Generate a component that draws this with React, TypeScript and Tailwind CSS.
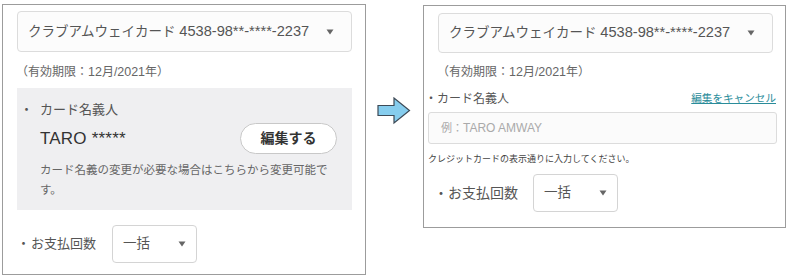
import React from 'react';

const font = { fontFamily: '"Liberation Sans", "Noto Sans CJK JP", sans-serif' };

function Caret() {
  return (
    <svg width="8" height="6" viewBox="0 0 8 6" className="shrink-0">
      <path d="M0.5 0.5 L7.5 0.5 L4 5.5 Z" fill="#666" />
    </svg>
  );
}

function CardSelect({ wide }: { wide?: boolean }) {
  return (
    <div
      className={`flex items-center justify-between w-[335px] border border-[#dcdcdc] rounded-[4px] bg-[#fcfcfc] pl-[10px] pr-[17px] ${wide ? 'h-[41px]' : 'h-[40px]'}`}
    >
      <span className="text-[13.5px] text-[#555] whitespace-nowrap">
        クラブアムウェイカード <span className="text-[14.6px]">4538-98**-****-2237</span>
      </span>
      <Caret />
    </div>
  );
}

function CountSelect() {
  return (
    <div className="flex items-center justify-between w-[85px] h-[38px] border border-[#d4d4d4] rounded-[4px] bg-white pl-[10px] pr-[10px]">
      <span className="text-[13.5px] text-[#555]">一括</span>
      <Caret />
    </div>
  );
}

function Arrow() {
  return (
    <svg width="34" height="28" viewBox="0 0 34 28" className="mt-[97px] ml-[11px] mr-[12px] shrink-0">
      <path
        d="M1 8.5 L17 8.5 L17 1 L32.5 13.5 L17 26 L17 18.5 L1 18.5 Z"
        fill="#86cdee"
        stroke="#3d4a57"
        strokeWidth="1.2"
        strokeLinejoin="miter"
      />
    </svg>
  );
}

export default function App() {
  return (
    <div className="w-[788px] h-[278px] bg-white flex items-start pl-[2px]" style={font}>
      {/* before */}
      <div className="mt-[4px] w-[364px] h-[271px] border border-[#9c9c9c] pt-[6px] pl-[14px] shrink-0">
        <CardSelect wide />
        <div className="mt-[11px] h-[18px] leading-[18px] text-[12px] text-[#666] -ml-[1px]">
          （有効期限：<span className="text-[12.5px]">12</span>月/<span className="text-[12.5px]">2021</span>年）
        </div>
        <div className="mt-[7px] w-[335px] h-[122px] bg-[#efeff1] pt-[13px]">
          <div className="text-[13px] leading-[18px] text-[#555] pl-[3px]">
            <span className="inline-block w-[20px]">・</span>カード名義人
          </div>
          <div className="mt-[4px] flex items-center justify-between pl-[23px] pr-[15px]">
            <span className="text-[17px] text-[#333] tracking-[0.2px]">TARO *****</span>
            <button className="w-[97px] h-[31px] rounded-full bg-white border border-[#c8c8c8] text-[14px] font-bold text-[#333]">
              編集する
            </button>
          </div>
          <p className="mt-[6px] ml-[23px] w-[296px] text-[11.5px] leading-[20px] text-[#666]">
            カード名義の変更が必要な場合はこちらから変更可能です。
          </p>
        </div>
        <div className="mt-[15px] flex items-center ml-[1px]">
          <span className="text-[13px] text-[#555]">
            <span className="inline-block w-[14px] -ml-[1px]">・</span>お支払回数
          </span>
          <div className="ml-[16px]">
            <CountSelect />
          </div>
        </div>
      </div>

      <Arrow />

      {/* after */}
      <div className="mt-[5px] w-[363px] h-[223px] border border-[#9c9c9c] pt-[7px] pl-[14px] shrink-0">
        <CardSelect />
        <div className="mt-[10px] h-[18px] leading-[18px] text-[12px] text-[#666] -ml-[1px]">
          （有効期限：<span className="text-[12.5px]">12</span>月/<span className="text-[12.5px]">2021</span>年）
        </div>
        <div className="mt-[10px] flex items-center justify-between -ml-[13px] w-[351px] h-[16px]">
          <span className="text-[12px] text-[#555]">・カード名義人</span>
          <span className="text-[10.6px] text-[#2a8c9a] underline">編集をキャンセル</span>
        </div>
        <div className="mt-[5px] -ml-[10px] w-[349px] h-[32px] border border-[#dcdcdc] rounded-[3px] bg-[#fbfbfb] flex items-center pl-[12px]">
          <span className="text-[11px] text-[#aaa]">
            例：<span className="text-[12px]">TARO AMWAY</span>
          </span>
        </div>
        <div className="mt-[9px] -ml-[10px] text-[9px] leading-[12px] text-[#444]">
          クレジットカードの表示通りに入力してください。
        </div>
        <div className="mt-[9px] flex items-center -ml-[4px]">
          <span className="text-[14px] text-[#555]">・お支払回数</span>
          <div className="ml-[15px]">
            <CountSelect />
          </div>
        </div>
      </div>
    </div>
  );
}
